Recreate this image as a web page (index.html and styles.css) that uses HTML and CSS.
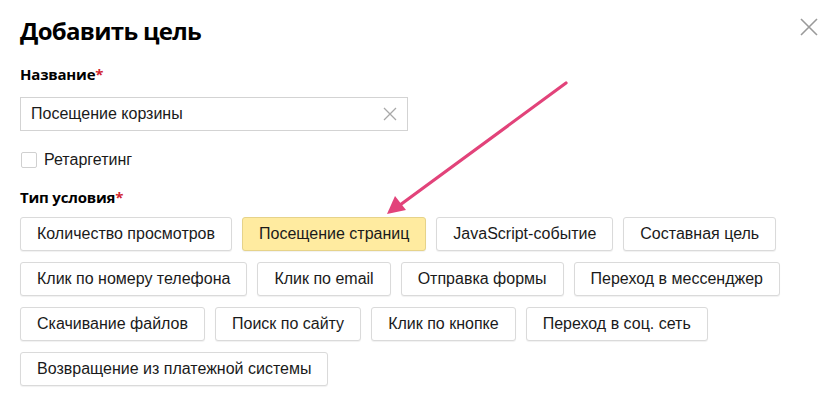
FILE: index.html
```html
<!DOCTYPE html>
<html lang="ru">
<head>
<meta charset="utf-8">
<link rel="stylesheet" href="styles.css">
</head>
<body>
<div class="dialog">
  <h1 class="title">Добавить цель</h1>
  <button class="close" aria-label="Закрыть">
    <svg width="20" height="20" viewBox="0 0 20 20"><path d="M2 2L18 18M18 2L2 18" stroke="#9a9a9a" stroke-width="1.6" fill="none"/></svg>
  </button>

  <div class="label">Название<span class="req">*</span></div>
  <div class="input">
    <span class="input-text">Посещение корзины</span>
    <svg class="clear" width="14" height="14" viewBox="0 0 14 14"><path d="M1 1L13 13M13 1L1 13" stroke="#a8a8a8" stroke-width="1.3" fill="none"/></svg>
  </div>

  <label class="check"><span class="box"></span>Ретаргетинг</label>

  <div class="label label2">Тип условия<span class="req">*</span></div>
  <div class="types">
    <div class="row">
      <span class="btn">Количество просмотров</span>
      <span class="btn active">Посещение страниц</span>
      <span class="btn">JavaScript-событие</span>
      <span class="btn">Составная цель</span>
    </div>
    <div class="row">
      <span class="btn">Клик по номеру телефона</span>
      <span class="btn">Клик по email</span>
      <span class="btn">Отправка формы</span>
      <span class="btn">Переход в мессенджер</span>
    </div>
    <div class="row">
      <span class="btn">Скачивание файлов</span>
      <span class="btn">Поиск по сайту</span>
      <span class="btn">Клик по кнопке</span>
      <span class="btn">Переход в соц. сеть</span>
    </div>
    <div class="row">
      <span class="btn">Возвращение из платежной системы</span>
    </div>
  </div>

  <svg class="arrow" width="836" height="396" viewBox="0 0 836 396">
    <path d="M566 83L400 205" stroke="#e2437a" stroke-width="3.2" stroke-linecap="round" fill="none"/>
    <path d="M387 214L395 196L406 210Z" fill="#e2437a"/>
  </svg>
</div>
</body>
</html>
```
FILE: styles.css
```css
* { box-sizing: border-box; }
html, body { margin: 0; padding: 0; background: #fff; }
body { font-family: "Liberation Sans", Arial, sans-serif; color: #000; }

.dialog {
  position: relative;
  width: 836px;
  height: 396px;
  padding: 15px 20px 0 20px;
}

.title {
  margin: 0;
  font-family: "Open Sans", "Liberation Sans", sans-serif;
  font-weight: 700;
  font-size: 24px;
  line-height: 32px;
  letter-spacing: -0.7px;
  color: #000;
}

.close {
  position: absolute;
  top: 17px;
  right: 17px;
  width: 20px;
  height: 20px;
  padding: 0;
  border: 0;
  background: none;
}
.close svg { display: block; }

.label {
  margin-top: 17px;
  font-family: "Open Sans", "Liberation Sans", sans-serif;
  font-weight: 700;
  font-size: 15px;
  line-height: 20px;
  letter-spacing: -0.2px;
}
.req { color: #d0262f; }

.input {
  margin-top: 13px;
  width: 388px;
  height: 34px;
  border: 1px solid #d3d3d3;
  display: flex;
  align-items: center;
  justify-content: space-between;
  padding: 0 10px 0 10px;
  font-size: 16px;
  color: #1a1a1a;
}
.clear { display: block; }

.check {
  display: flex;
  align-items: center;
  gap: 7px;
  margin-top: 20px;
  font-size: 16px;
  line-height: 18px;
  color: #1a1a1a;
}
.box {
  width: 16px;
  height: 16px;
  border: 1px solid #d0d0d0;
  border-radius: 2px;
  margin-left: 1px;
  background: #fff;
}

.label2 { margin-top: 18px; }

.types {
  margin-top: 10px;
  display: flex;
  flex-direction: column;
  gap: 11px;
}
.row {
  display: flex;
  gap: 10px;
}

.btn {
  height: 34px;
  display: inline-flex;
  align-items: center;
  padding: 0 16px;
  border: 1px solid #dadada;
  border-radius: 3px;
  box-shadow: 0 1px 1px rgba(0,0,0,0.06);
  font-size: 16px;
  color: #1a1a1a;
  background: #fff;
  white-space: nowrap;
}
.btn.active {
  background: #ffeba0;
  border-color: #e6d38a;
}

.arrow {
  position: absolute;
  left: 0;
  top: 0;
  pointer-events: none;
}
```
